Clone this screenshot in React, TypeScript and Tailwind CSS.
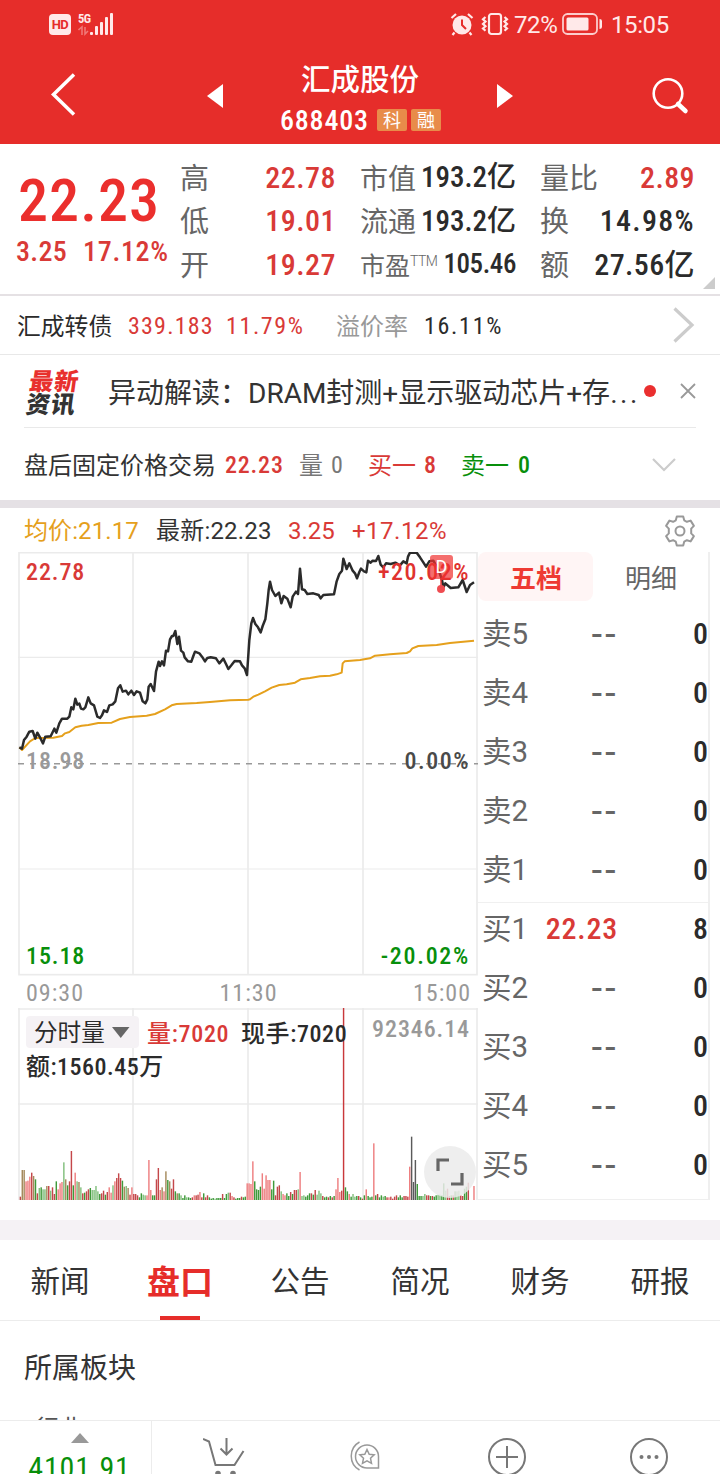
import React from 'react';

const NUM = "[font-family:'Roboto_Condensed','Noto_Sans_CJK_SC',sans-serif] font-medium";
const NUM_LIGHT = "[font-family:'Roboto_Condensed','Noto_Sans_CJK_SC',sans-serif] font-[450]";

const AVG_LINE =
  '28,622 36,630 60,604 76,594 130,593 156,588 165,580 178,576 196,562 215,557 235,555 265,549 305,548 330,537 360,531 410,527 435,522 465,508 485,496 500,492 560,489 600,486 660,481 715,479 720,478 730,470 745,464 765,454 785,443 808,435 830,433 855,428 872,418 900,414 930,409 960,407 980,403 995,398 998,370 1004,364 1050,360 1080,355 1095,347 1140,343 1190,339 1200,334 1207,325 1225,318 1280,315 1320,309 1392,302';

const PRICE_LINE =
  '28,622 36,626 42,600 50,590 58,575 68,573 76,596 82,578 90,592 99,610 106,590 122,589 133,566 139,578 148,550 156,536 172,536 178,530 184,502 190,508 196,476 202,494 208,491 213,506 220,508 226,502 235,472 242,490 252,496 262,530 270,534 276,526 282,511 291,516 298,496 308,493 316,484 324,445 331,436 338,455 348,452 355,463 364,452 372,465 380,454 390,458 398,484 406,490 412,478 416,440 422,432 432,453 438,395 446,365 450,378 456,364 462,376 468,332 474,334 480,298 486,288 490,288 496,273 502,312 507,290 513,332 520,338 524,352 534,364 544,365 550,348 555,335 568,340 576,350 585,364 592,354 602,352 618,355 628,370 640,356 648,372 655,387 664,376 674,363 690,364 696,376 704,385 711,405 718,300 724,250 729,234 736,252 744,262 752,277 758,258 766,238 772,190 776,150 780,125 786,150 796,168 807,158 814,190 821,168 832,176 842,202 848,170 858,155 864,162 870,86 876,148 884,150 892,162 910,160 926,165 932,175 940,165 972,163 980,124 988,102 996,92 1000,56 1010,87 1018,70 1028,92 1035,100 1041,115 1048,96 1053,86 1062,94 1069,97 1074,62 1082,68 1088,62 1098,63 1105,48 1112,74 1120,82 1128,70 1142,72 1156,68 1170,76 1180,64 1190,70 1194,50 1200,38 1220,38 1230,52 1238,64 1248,80 1258,64 1270,62 1286,90 1296,120 1300,142 1306,130 1322,144 1345,142 1358,120 1370,156 1380,135 1392,127';

// one entry per minute: colour key + bar height
const VOLUME =
  'r10 o90 o90 p56 p58 p70 r82 o72 g62 r20 l36 g38 l32 l32 o42 r42 l28 r38 r18 g56 p32 p50 p54 l113 o62 g44 r56 r147 g44 p82 l56 o54 l38 r20 g22 r26 r32 g36 l30 l30 l42 l26 g18 r20 r28 g16 r24 p38 p22 l44 p56 r66 r80 r66 g58 o40 l42 o36 r16 p38 r18 r18 r14 g8 g20 l16 l14 p14 p120 p30 g14 g14 r62 r96 p30 o38 p26 o86 g60 o56 r34 r62 g26 o20 g20 l14 g6 g14 l8 g8 g6 r8 p14 r14 r16 p24 r8 g20 r8 r14 g8 g4 g6 l4 g6 g6 g6 r18 g6 g18 l22 r22 p12 r8 g4 g6 g6 r10 g8 g10 p50 p50 p48 p116 g56 g32 g30 g40 p80 p34 p74 p60 p60 g32 g58 r14 r40 r44 l26 p18 p14 g20 g12 r24 g18 r30 r30 l32 p84 l12 l14 g10 g14 g20 r20 g16 r30 l16 l28 l20 r12 g8 g10 r8 g12 r8 g12 p32 p66 p24 r28 R576 g38 g26 p18 g10 l18 l10 g12 r12 g8 r4 g14 p32 g12 g8 g10 p170 g14 r18 g8 g14 l10 g12 r8 p8 r10 r4 r10 r14 g8 g14 g8 r12 r12 r10 p100 k190 k54 k120 g48 g12 g12 l12 l18 r14 r14 g12 r12 g10 g14 l16 l16 g14 g50 l28 r34 r12 g14 r14 g26 l26 l28 r14 r12 g34 g40 r52 r0 r0 p42'.split(
    ' ',
  );

const BAR_COLORS: Record<string, string> = {
  r: '#c4474a',
  p: '#ee7f80',
  g: '#3f9a3a',
  l: '#82bf7d',
  o: '#a58a5c',
  k: '#5a5a5a',
  R: '#c9383b',
};

const ORDERS = [
  { label: '卖5', price: '--', qty: '0' },
  { label: '卖4', price: '--', qty: '0' },
  { label: '卖3', price: '--', qty: '0' },
  { label: '卖2', price: '--', qty: '0' },
  { label: '卖1', price: '--', qty: '0' },
  { label: '买1', price: '22.23', qty: '8' },
  { label: '买2', price: '--', qty: '0' },
  { label: '买3', price: '--', qty: '0' },
  { label: '买4', price: '--', qty: '0' },
  { label: '买5', price: '--', qty: '0' },
];

const TABS = ['新闻', '盘口', '公告', '简况', '财务', '研报'];

const StatusBar = () => (
  <div className="flex h-12 items-center pl-[49px] text-[#ffe9e9]">
    <div className="flex h-[21px] w-[22px] items-center justify-center rounded-[4px] bg-[#ffe9e9]">
      <span className="text-[13px] leading-none font-bold tracking-[-0.5px] text-[#e62d2a]">HD</span>
    </div>
    <svg className="ml-[7px] h-6 w-9" viewBox="0 0 36 24">
      <text x="0" y="10.500" fontSize="12.500" fontWeight="700" fill="currentColor" fontFamily="Roboto Condensed" letterSpacing="-0.600">
        5G
      </text>
      <g stroke="currentColor" strokeWidth="1.6" opacity="0.4" fill="none">
        <path d="M0.500 18L4 15v8M10 19L7 22V15" />
      </g>
      <g fill="currentColor">
        <rect x="12" y="20" width="3" height="3" rx="1" />
        <rect x="17" y="14" width="3" height="9" rx="1" />
        <rect x="22" y="10" width="3" height="13" rx="1" />
        <rect x="27" y="5" width="3" height="18" rx="1" />
        <rect x="32" y="1" width="3" height="22" rx="1" />
      </g>
    </svg>
    <svg className="ml-[336px] h-6 w-6" viewBox="0 0 24 24">
      <circle cx="12" cy="13" r="9.500" fill="currentColor" />
      <path d="M1.500 6L6 2M22.500 6L18 2M4.500 20.500L2.500 23M19.500 20.500L21.500 23" stroke="currentColor" strokeWidth="2.200" />
      <path d="M12 7.500v5.500l4 4" stroke="#e62d2a" strokeWidth="2" fill="none" />
    </svg>
    <svg className="ml-[7px] h-6 w-7" viewBox="0 0 28 24">
      <rect x="8" y="2" width="12" height="20" rx="2.500" fill="none" stroke="currentColor" strokeWidth="2.200" />
      <path
        d="M4.500 5l-2.500 2.300L4.500 9.600l-2.500 2.300L4.500 14.200l-2.500 2.300L4.500 18.800M23.500 5l2.500 2.300L23.500 9.600l2.500 2.300L23.500 14.200l2.500 2.300L23.500 18.800"
        fill="none"
        stroke="currentColor"
        strokeWidth="2.200"
      />
    </svg>
    <span className="ml-[5px] w-[47px] pt-px text-[24px] leading-none tracking-[-0.4px]">72%</span>
    <svg className="h-6 w-11" viewBox="0 0 44 24">
      <rect x="2" y="2" width="34" height="20" rx="4.500" fill="none" stroke="currentColor" strokeWidth="1.800" opacity="0.85" />
      <rect x="5.500" y="5.500" width="22" height="13" rx="1.500" fill="currentColor" />
      <path d="M38.500 7q2.500 0 2.500 2v6q0 2-2.500 2z" fill="currentColor" />
    </svg>
    <span className="ml-[6px] pt-px text-[24px] leading-none tracking-[-0.4px]">15:05</span>
  </div>
);

const Header = () => (
  <header className="h-[144px] shrink-0 bg-[#e62d2a] text-white">
    <StatusBar />
    <div className="flex h-24 items-start">
      <svg className="mt-[24px] ml-[50px] h-11 w-7" viewBox="0 0 28 44">
        <path d="M24 2.500L3.500 22.500L24 42.500" fill="none" stroke="#fff" strokeWidth="3.500" />
      </svg>
      <svg className="mt-[36px] ml-[129px] h-6 w-4" viewBox="0 0 16 24">
        <path d="M16 0v24L0 12z" fill="#fff" />
      </svg>
      <div className="ml-[53px] flex w-[168px] flex-col items-center">
        <h1 className="mt-[9px] h-[42px] text-[29.500px] leading-[40px] font-medium [font-family:'Noto_Sans_CJK_SC',sans-serif]">
          汇成股份
        </h1>
        <div className="flex h-[42px] w-full items-center pl-[4px]">
          <span className={`${NUM} w-[97px] pt-px text-[28px] leading-none tracking-[0.8px]`}>688403</span>
          <span className="flex h-[22px] w-[30px] shrink-0 items-center justify-center rounded-[2px] bg-[#e88c4a] pt-px text-[18px] leading-none">
            科
          </span>
          <span className="ml-1 flex h-[22px] w-[30px] shrink-0 items-center justify-center rounded-[2px] bg-[#e88c4a] pt-px text-[18px] leading-none">
            融
          </span>
        </div>
      </div>
      <svg className="mt-[36px] ml-[53px] h-6 w-4" viewBox="0 0 16 24">
        <path d="M0 0v24L16 12z" fill="#fff" />
      </svg>
      <svg className="mt-[28px] ml-[138px] h-10 w-10" viewBox="0 0 40 40">
        <circle cx="17" cy="17.500" r="14.300" fill="none" stroke="#fff" strokeWidth="2.600" />
        <path d="M27 28l7.500 7" stroke="#fff" strokeWidth="4.500" strokeLinecap="round" />
      </svg>
    </div>
  </header>
);

interface StatProps {
  label: React.ReactNode;
  value: string;
  valueClass: string;
}

const Stat: React.FC<StatProps> = ({ label, value, valueClass }) => (
  <div className="flex h-[43.500px] items-center justify-between whitespace-nowrap">
    <span className="pt-[3px] text-[29px] leading-none text-[#666]">{label}</span>
    <span className={`${NUM} leading-none ${valueClass}`}>{value}</span>
  </div>
);

const Quote = () => (
  <section className="relative flex h-[152px] shrink-0 border-b-2 border-[#e5e1e4] pt-[12px]">
    <div className="w-[180px] text-[#eb2f2d]">
      <div className={`${NUM} mt-[15px] pl-[18px] text-[60px] leading-[60px] tracking-[1.100px]`}>22.23</div>
      <div className={`${NUM} mt-[6px] flex pl-[16px] text-[28px] leading-[30px] text-[#d93a37]`}>
        <span className="w-[67px] tracking-[0.300px]">3.25</span>
        <span className="tracking-[0.700px]">17.12%</span>
      </div>
    </div>
    <div className="w-[156px]">
      <Stat label="高" value="22.78" valueClass="text-[30px] tracking-[0.500px] text-[#d93a37]" />
      <Stat label="低" value="19.01" valueClass="text-[30px] tracking-[0.500px] text-[#d93a37]" />
      <Stat label="开" value="19.27" valueClass="text-[30px] tracking-[0.500px] text-[#d93a37]" />
    </div>
    <div className="ml-[24px] w-[156px]">
      <Stat label={<span className="text-[28px]">市值</span>} value="193.2亿" valueClass="text-[29px] text-[#2b2b2b]" />
      <Stat label={<span className="text-[28px]">流通</span>} value="193.2亿" valueClass="text-[29px] text-[#2b2b2b]" />
      <Stat
        label={
          <span className="flex items-start text-[25px]">
            市盈<span className="text-[14px] leading-none font-light tracking-[-0.500px]">TTM</span>
          </span>
        }
        value="105.46"
        valueClass="text-[27px] tracking-[-0.400px] text-[#2b2b2b]"
      />
    </div>
    <div className="ml-[24px] w-[155px]">
      <Stat label="量比" value="2.89" valueClass="text-[30px] tracking-[0.400px] text-[#d93a37]" />
      <Stat label="换" value="14.98%" valueClass="text-[30px] tracking-[1.300px] text-[#2b2b2b]" />
      <Stat label="额" value="27.56亿" valueClass="text-[30px] tracking-[0.400px] text-[#2b2b2b]" />
    </div>
    <svg className="absolute right-[5px] bottom-[5px] h-3 w-3" viewBox="0 0 12 12">
      <path d="M12 0v12H0z" fill="#ccc" />
    </svg>
  </section>
);

const BondRow = () => (
  <section className="flex h-[59px] shrink-0 items-center border-b border-[#e8e8e8] pl-[17px] leading-none text-[#2b2b2b]">
    <span className="w-[111px] text-[23.800px] [font-family:'Noto_Sans_CJK_SC',sans-serif]">汇成转债</span>
    <span className={`${NUM_LIGHT} w-[98px] pt-px text-[24px] tracking-[1.200px] text-[#d93a37]`}>339.183</span>
    <span className={`${NUM_LIGHT} w-[110px] pt-px text-[24px] tracking-[1.600px] text-[#d93a37]`}>11.79%</span>
    <span className="w-[88px] pt-[3px] text-[24px] text-[#999]">溢价率</span>
    <span className={`${NUM_LIGHT} pt-px text-[24px] tracking-[1.700px]`}>16.11%</span>
    <svg className="ml-auto mr-[25px] h-9 w-6" viewBox="0 0 24 36">
      <path d="M3.500 1.500L21 18L3.500 34.500" fill="none" stroke="#ccc" strokeWidth="3.200" />
    </svg>
  </section>
);

const NewsRow = () => (
  <section className="mx-6 flex h-[73px] shrink-0 items-center border-b border-[#e9e9e9] text-[#333]">
    <div className="ml-[4px] w-[53px] -skew-x-[8deg] text-[24px] leading-[23px] font-black tracking-[1px] [font-family:'Noto_Sans_CJK_SC',sans-serif]">
      <div className="text-[#e8302d]">最新</div>
      <div>资讯</div>
    </div>
    <span className="ml-[27px] w-[534px] pt-[6px] text-[28px] leading-none whitespace-nowrap">
      异动解读：DRAM封测+显示驱动芯片+存<span className="tracking-[2.500px]">...</span>
    </span>
    <span className="ml-[2px] h-3 w-3 rounded-full bg-[#ea2f2f]" />
    <svg className="ml-auto h-4 w-4" viewBox="0 0 16 16">
      <path d="M1 1l14 14M15 1L1 15" stroke="#999" strokeWidth="1.800" />
    </svg>
  </section>
);

const AfterHoursRow = () => (
  <section className="flex h-[72px] shrink-0 items-center pt-[2px] pl-6 text-[24px] leading-none text-[#333]">
    <span className="w-[201px] pt-px">盘后固定价格交易</span>
    <span className={`${NUM} w-[74px] tracking-[0.800px] text-[#d93a37]`}>22.23</span>
    <span className="w-[32px] pt-px text-[#777]">量</span>
    <span className={`${NUM_LIGHT} w-[37px] text-[#777]`}>0</span>
    <span className="w-[56px] pt-px text-[#d93a37]">买一</span>
    <span className={`${NUM} w-[37px] text-[#d93a37]`}>8</span>
    <span className="w-[57px] pt-px text-[#088f0b]">卖一</span>
    <span className={`${NUM} text-[#088f0b]`}>0</span>
    <svg className="ml-auto mr-[44px] h-4 w-6" viewBox="0 0 24 16">
      <path d="M1 2l11 11L23 2" fill="none" stroke="#ccc" strokeWidth="2.200" />
    </svg>
  </section>
);

const ChartSummary = () => (
  <div className="flex h-[44px] shrink-0 items-center pt-[2px] pl-6 text-[24px] leading-none">
    <span className="w-[132px] tracking-[0.100px] text-[#e5a01c]">均价:21.17</span>
    <span className="w-[132px] tracking-[0.200px] text-[#333]">最新:22.23</span>
    <span className="w-[64px] text-[#d93a37]">3.25</span>
    <span className="tracking-[0.500px] text-[#d93a37]">+17.12%</span>
    <svg className="ml-auto mr-[24px] h-8 w-8" viewBox="0 0 32 32">
      <path
        d="M12.800 1.500h6.400l1 3.800 2.700 1.500 3.700-1.200 3.300 5.300-2.700 2.700v4.800l2.700 2.700-3.300 5.300-3.700-1.200-2.700 1.500-1 3.800h-6.400l-1-3.800-2.700-1.500-3.700 1.200-3.300-5.300 2.700-2.700v-4.800l-2.700-2.700 3.300-5.300 3.700 1.200 2.700-1.500z"
        fill="none"
        stroke="#999"
        strokeWidth="2"
        strokeLinejoin="round"
      />
      <circle cx="16" cy="16" r="4.500" fill="none" stroke="#999" strokeWidth="2" />
    </svg>
  </div>
);

const CHART_LABEL = `${NUM} absolute text-[24px] leading-none`;

const PriceChart = () => (
  <div className="relative h-[424px] w-[460px]">
    <svg className="block h-[424px] w-[460px]" viewBox="24 36 1380 1272">
      <g stroke="#ebebeb" strokeWidth="5" fill="none">
        <rect x="27" y="38" width="1374" height="1266" />
        <path d="M369 36v1269M714 36v1269M1059 36v1269" />
        <path d="M24 352h1380M24 987h1380" strokeWidth="3.500" />
      </g>
      <path d="M24 671h1380" stroke="#999" strokeWidth="4.500" strokeDasharray="18 18" />
      <polyline points={AVG_LINE} fill="none" stroke="#e5a01c" strokeWidth="6" strokeLinejoin="round" />
      <polyline points={PRICE_LINE} fill="none" stroke="#2b2b2b" strokeWidth="7.500" strokeLinejoin="round" />
    </svg>
    <span className={`${CHART_LABEL} top-[8px] left-[8px] tracking-[0.900px] text-[#d93a37]`}>22.78</span>
    <span className={`${CHART_LABEL} top-[8px] right-[8px] tracking-[1.500px] text-[#e0322f]`}>+20.02%</span>
    <span className={`${CHART_LABEL} top-[197px] left-[8px] tracking-[0.900px] text-[#999]`}>18.98</span>
    <span className={`${CHART_LABEL} top-[197px] right-[8px] tracking-[1.500px] text-[#4a4a4a]`}>0.00%</span>
    <span className={`${CHART_LABEL} top-[392px] left-[8px] tracking-[0.900px] text-[#088f0b]`}>15.18</span>
    <span className={`${CHART_LABEL} top-[392px] right-[8px] tracking-[1.700px] text-[#088f0b]`}>-20.02%</span>
    <span className="absolute top-[3px] left-[412px] flex h-6 w-[23px] items-center justify-center rounded-[3px] bg-[#f0312f]/70 text-[18px] leading-none text-white">
      D
    </span>
    <span className="absolute top-[26px] left-[422px] h-3 w-[2px] bg-[#f0312f]/70" />
    <span className="absolute top-[33px] left-[419px] h-2 w-2 rounded-full bg-[#ef4b50]" />
  </div>
);

const VolumeChart = () => (
  <div className="relative h-[192px] w-[460px]">
    <svg className="block h-[192px] w-[460px]" viewBox="24 24 1380 576">
      <path d="M24 27h1380M27 24v576M369 24v576M714 24v576M1059 24v576M1401 24v576M24 312h1380" stroke="#ebebeb" strokeWidth="5" />
      {VOLUME.map((bar, i) => {
        const height = Number(bar.slice(1));
        return <rect key={i} x={29 + i * 5.67} y={600 - height} width="4.300" height={height} fill={BAR_COLORS[bar[0]]} />;
      })}
    </svg>
    <div className="absolute top-[8px] left-[8px] flex h-8 items-center text-[24px] leading-none text-[#2b2b2b]">
      <span className="flex h-8 w-[113px] items-center rounded-[4px] bg-[#f5f2f5] pt-[3px] pl-[8px] text-[23.600px]">
        分时量
        <svg className="mb-[2px] ml-[7px] h-[11px] w-[18px]" viewBox="0 0 18 11">
          <path d="M0 0h17.500L8.750 11z" fill="#666" />
        </svg>
      </span>
      <span className={`${NUM} ml-[8px] w-[94px] pt-[3px] tracking-[0.700px] text-[#d93a37]`}>量:7020</span>
      <span className={`${NUM} pt-[3px] tracking-[0.600px] whitespace-nowrap`}>现手:7020</span>
    </div>
    <span className={`${CHART_LABEL} top-[47px] left-[8px] tracking-[0.500px] text-[#2b2b2b]`}>额:1560.45万</span>
    <span className={`${CHART_LABEL} top-[9px] right-[8px] tracking-[0.900px] text-[#999]`}>92346.14</span>
    <span className="absolute top-[138px] left-[406px] flex h-[52px] w-[52px] items-center justify-center rounded-full bg-[#ebebeb]/85">
      <svg className="h-7 w-7" viewBox="0 0 28 28">
        <path d="M2 13V2h11M26 15v11H15" fill="none" stroke="#666" strokeWidth="3.200" />
      </svg>
    </span>
  </div>
);

const OrderBook = () => (
  <div className="h-[648px] w-[232px] border-r-2 border-b border-[#efefef]">
    <div className="flex h-[49px] text-[26px] leading-none">
      <span className="flex w-[115px] items-center justify-center rounded-lg bg-[#fff5f5] pl-px font-bold text-[#ee3a33] [font-family:'Noto_Sans_CJK_SC',sans-serif]">
        五档
      </span>
      <span className="flex w-[115px] items-center justify-center pt-[4px] pl-px text-[#666]">明细</span>
    </div>
    <div className="pt-[3px]">
      {ORDERS.map((order, i) => (
        <React.Fragment key={order.label}>
          {i === 5 && <div className="mb-[-1px] translate-y-[3px] border-t border-[#f0f0f0]" />}
          <div className="flex h-[59px] items-center pl-[4px] leading-none">
            <span className="w-[48px] pt-[2px] text-[29.500px] text-[#666]">{order.label}</span>
            {order.price === '--' ? (
              <span className="w-[88px] pb-[5px] text-right text-[34px] font-medium tracking-[1.500px] text-[#666] [font-family:'Noto_Sans_CJK_SC',sans-serif]">
                --
              </span>
            ) : (
              <span className={`${NUM} w-[88px] text-right text-[30px] tracking-[0.800px] text-[#d93a37]`}>{order.price}</span>
            )}
            <span className={`${NUM} ml-auto text-[30px] text-[#2b2b2b]`}>{order.qty}</span>
          </div>
        </React.Fragment>
      ))}
    </div>
  </div>
);

const TabBar = () => (
  <nav className="flex h-[81px] shrink-0 border-b border-[#ececec]">
    {TABS.map((tab) => (
      <div key={tab} className="flex w-[120px] flex-col items-center">
        {tab === '盘口' ? (
          <>
            <span className="flex h-[76px] items-center pt-[5px] text-[33px] leading-none font-bold text-[#e62d2a] [font-family:'Noto_Sans_CJK_SC',sans-serif]">
              {tab}
            </span>
            <span className="h-1 w-10 bg-[#e62d2a]" />
          </>
        ) : (
          <span className="flex h-[76px] items-center pt-[10px] text-[29.500px] leading-none text-[#333]">{tab}</span>
        )}
      </div>
    ))}
  </nav>
);

const BottomBar = () => (
  <footer className="flex h-[54px] shrink-0 overflow-hidden border-t border-[#ececec] bg-white">
    <div className="flex h-[54px] w-[152px] flex-col items-center border-r border-[#ececec] pr-[2px] pl-[10px]">
      <svg className="mt-[12px] h-[10px] w-[18px] shrink-0" viewBox="0 0 18 10">
        <path d="M9 0l9 10H0z" fill="#999" />
      </svg>
      <span className={`${NUM_LIGHT} mt-[10px] text-[30px] leading-[30px] tracking-[0.800px] text-[#088f0b]`}>4101.91</span>
    </div>
    <div className="flex items-start">
      <svg className="mt-[15px] ml-[51px] h-12 w-[42px]" viewBox="0 0 42 48" fill="none" stroke="#777" strokeWidth="2">
        <path d="M0 3l6 2.500L12.500 29h19L40.500 15" />
        <path d="M23.500 2v16.500M17.500 12.500l6 6 6-6" />
        <circle cx="15" cy="37.500" r="1.800" fill="#777" />
        <circle cx="30" cy="37.500" r="1.800" fill="#777" />
      </svg>
      <svg className="mt-[20px] ml-[105px] h-8 w-8" viewBox="0 0 32 32" fill="none" stroke="#999" strokeWidth="1.500">
        <path d="M28.500 15.500a11.500 11.500 0 1 0-11.500 11.500h11.500z" />
        <path d="M9.500 1A16 16 0 0 0 9.500 29" />
        <path d="M17 8.500l2.200 4.700 5 .6-3.700 3.500 1 5L17 19.800l-4.500 2.500 1-5-3.700-3.500 5-.6z" />
      </svg>
      <svg className="mt-[16px] ml-[105px] h-10 w-10" viewBox="0 0 40 40" fill="none" stroke="#777" strokeWidth="2">
        <circle cx="20" cy="20" r="18" />
        <path d="M20 9v22M9 20h22" />
      </svg>
      <svg className="mt-[16px] ml-[102px] h-10 w-10" viewBox="0 0 40 40" fill="none" stroke="#777" strokeWidth="2">
        <circle cx="20" cy="20" r="18" />
        <g fill="#777" stroke="none">
          <circle cx="12.500" cy="20" r="2" />
          <circle cx="20" cy="20" r="2" />
          <circle cx="27.500" cy="20" r="2" />
        </g>
      </svg>
    </div>
  </footer>
);

export default function App() {
  return (
    <div className="flex h-[1474px] w-[720px] flex-col overflow-hidden bg-white [font-family:Roboto,'Noto_Sans_CJK_SC',sans-serif]">
      <Header />
      <Quote />
      <BondRow />
      <NewsRow />
      <AfterHoursRow />
      <div className="h-2 shrink-0 bg-[#e5e1e5]" />
      <ChartSummary />
      <section className="flex h-[648px] shrink-0 pl-[18px]">
        <div className="flex w-[460px] flex-col">
          <PriceChart />
          <div className={`${NUM_LIGHT} flex h-8 items-center justify-between pt-[2px] pr-[7px] pl-[8px] text-[24px] leading-none tracking-[1px] text-[#999]`}>
            <span>09:30</span>
            <span>11:30</span>
            <span>15:00</span>
          </div>
          <VolumeChart />
        </div>
        <OrderBook />
      </section>
      <div className="mt-5 h-5 shrink-0 bg-[#f5f2f5]" />
      <TabBar />
      <section className="h-[99px] shrink-0 overflow-hidden pl-6 text-[#333]">
        <h2 className="mt-[28px] text-[28px] leading-[40px]">所属板块</h2>
        <p className="mt-[25px] pl-[11px] text-[24px] leading-[30px] text-[#555]">行业</p>
      </section>
      <BottomBar />
    </div>
  );
}
